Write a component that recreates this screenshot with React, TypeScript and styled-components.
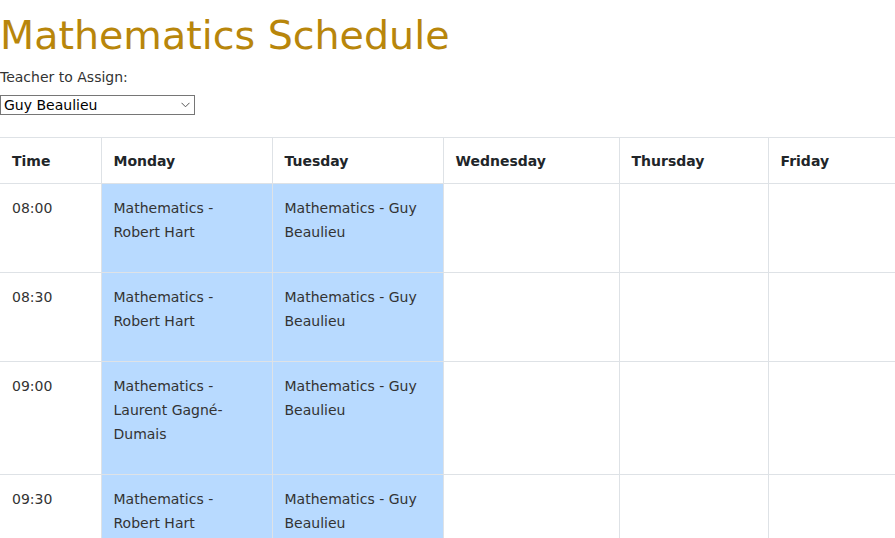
import React from "react";
import styled, { createGlobalStyle } from "styled-components";

const Global = createGlobalStyle`
  html, body { margin: 0; padding: 0; overflow: hidden; background: #fff; }
  body { font-family: "DejaVu Sans", Verdana, sans-serif; color: #333; }
`;

const Page = styled.div`
  display: flex;
  flex-direction: column;
`;

const Title = styled.h1`
  margin: 10px 0 0;
  font-size: 39.6px;
  font-weight: normal;
  line-height: 50px;
  color: #b8860b;
`;

const Label = styled.label`
  margin-top: 9px;
  font-size: 14px;
  line-height: 17px;
  color: #333;
`;

const SelectBox = styled.div`
  position: relative;
  margin-top: 9px;
  width: 195px;
  height: 20px;
`;

const Select = styled.select`
  appearance: none;
  -webkit-appearance: none;
  box-sizing: border-box;
  width: 195px;
  height: 20px;
  font-family: "DejaVu Sans", Verdana, sans-serif;
  font-size: 14px;
  line-height: 18px;
  color: #000;
  border: 1px solid #767676;
  border-radius: 0;
  background: #fff;
  padding: 0 0 0 3px;
  outline: none;
`;

const Chevron = styled.svg`
  position: absolute;
  right: 5px;
  top: 7px;
  width: 9px;
  height: 6px;
  pointer-events: none;
`;

const TableWrap = styled.div`
  margin-top: 22px;
  overflow: hidden;
`;

const Table = styled.table`
  border-collapse: collapse;
  table-layout: fixed;
  width: 920px;
`;

const Th = styled.th<{ $w: number; $first?: boolean }>`
  box-sizing: border-box;
  width: ${(p) => p.$w}px;
  text-align: left;
  font-size: 14px;
  line-height: 21px;
  font-weight: bold;
  color: #212529;
  padding: 13px 12px 11px;
  border: 1px solid #dee2e6;
  border-left: ${(p) => (p.$first ? "none" : "1px solid #dee2e6")};
`;

const Td = styled.td<{ $filled?: boolean; $first?: boolean }>`
  box-sizing: border-box;
  vertical-align: top;
  font-size: 14px;
  line-height: 24px;
  color: #333;
  padding: 12px 12px 28px;
  border: 1px solid #dee2e6;
  border-left: ${(p) => (p.$first ? "none" : "1px solid #dee2e6")};
  background: ${(p) => (p.$filled ? "#b8daff" : "#fff")};
`;

const cols = [
  { name: "Time", w: 101 },
  { name: "Monday", w: 171 },
  { name: "Tuesday", w: 171 },
  { name: "Wednesday", w: 176 },
  { name: "Thursday", w: 149 },
  { name: "Friday", w: 152 },
];

const rows = [
  { time: "08:00", mon: "Mathematics - Robert Hart", tue: "Mathematics - Guy Beaulieu" },
  { time: "08:30", mon: "Mathematics - Robert Hart", tue: "Mathematics - Guy Beaulieu" },
  { time: "09:00", mon: "Mathematics - Laurent Gagné-Dumais", tue: "Mathematics - Guy Beaulieu" },
  { time: "09:30", mon: "Mathematics - Robert Hart", tue: "Mathematics - Guy Beaulieu" },
  { time: "10:00", mon: "", tue: "" },
];

export default function App() {
  return (
    <Page>
      <Global />
      <Title>Mathematics Schedule</Title>
      <Label htmlFor="teacher">Teacher to Assign:</Label>
      <SelectBox>
        <Select id="teacher" defaultValue="Guy Beaulieu">
          <option>Guy Beaulieu</option>
          <option>Robert Hart</option>
          <option>Laurent Gagné-Dumais</option>
        </Select>
        <Chevron viewBox="0 0 9 6" fill="none">
          <path d="M0.5 0.8 L4.5 4.8 L8.5 0.8" stroke="#555" strokeWidth="1" />
        </Chevron>
      </SelectBox>
      <TableWrap>
        <Table>
          <thead>
            <tr>
              {cols.map((c, i) => (
                <Th key={c.name} $w={c.w} $first={i === 0}>
                  {c.name}
                </Th>
              ))}
            </tr>
          </thead>
          <tbody>
            {rows.map((r) => (
              <tr key={r.time}>
                <Td $first>{r.time}</Td>
                <Td $filled={!!r.mon}>{r.mon}</Td>
                <Td $filled={!!r.tue}>{r.tue}</Td>
                <Td />
                <Td />
                <Td />
              </tr>
            ))}
          </tbody>
        </Table>
      </TableWrap>
    </Page>
  );
}
